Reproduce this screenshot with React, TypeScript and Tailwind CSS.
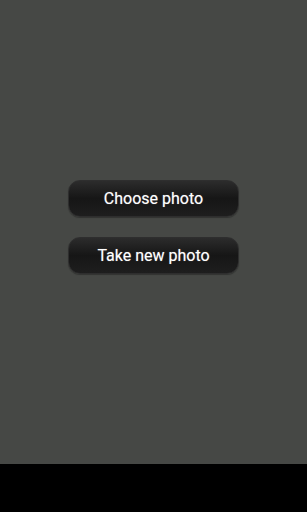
export default function App() {
  const btn =
    'w-[171px] h-[37px] rounded-[12px] border border-[#2e2e2e] bg-gradient-to-b from-[#2c2c2c] via-[#161616] to-[#1e1e1e] text-white text-[16px] leading-none [text-shadow:0_0_1px_rgba(255,255,255,0.5)] shadow-[0_1px_1px_rgba(0,0,0,0.3)]'

  return (
    <div className="h-[512px] w-[307px] flex flex-col font-['Roboto',sans-serif]">
      <div className="flex-1 bg-[#464845] flex flex-col items-center pt-[180px] gap-[20px]">
        <button className={btn}>Choose photo</button>
        <button className={btn}>Take new photo</button>
      </div>
      <div className="h-[48px] bg-black"></div>
    </div>
  )
}
